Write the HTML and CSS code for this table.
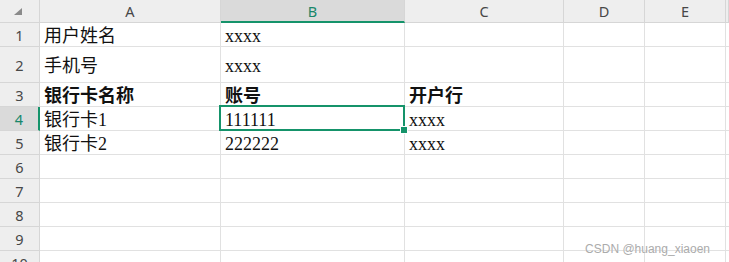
FILE: index.html
```html
<!DOCTYPE html>
<html lang="zh-CN">
<head>
<meta charset="utf-8">
<title>Sheet</title>
<link rel="stylesheet" href="styles.css">
</head>
<body>
<div class="sheet">
  <div class="corner hdr"><svg class="tri" width="8" height="7" viewBox="0 0 8 7"><polygon points="8,0 8,7 0,7" fill="#8a8a8a"/></svg></div>
  <div class="hdr col">A</div>
  <div class="hdr col sel-col">B</div>
  <div class="hdr col">C</div>
  <div class="hdr col">D</div>
  <div class="hdr col">E</div>
  <div class="hdr col"></div>

  <div class="hdr row">1</div>
  <div class="cell">用户姓名</div>
  <div class="cell">xxxx</div>
  <div class="cell"></div><div class="cell"></div><div class="cell"></div><div class="cell"></div>

  <div class="hdr row">2</div>
  <div class="cell">手机号</div>
  <div class="cell">xxxx</div>
  <div class="cell"></div><div class="cell"></div><div class="cell"></div><div class="cell"></div>

  <div class="hdr row">3</div>
  <div class="cell bold">银行卡名称</div>
  <div class="cell bold">账号</div>
  <div class="cell bold">开户行</div>
  <div class="cell"></div><div class="cell"></div><div class="cell"></div>

  <div class="hdr row sel-row">4</div>
  <div class="cell">银行卡1</div>
  <div class="cell active">111111<span class="handle"></span></div>
  <div class="cell">xxxx</div>
  <div class="cell"></div><div class="cell"></div><div class="cell"></div>

  <div class="hdr row">5</div>
  <div class="cell">银行卡2</div>
  <div class="cell">222222</div>
  <div class="cell">xxxx</div>
  <div class="cell"></div><div class="cell"></div><div class="cell"></div>

  <div class="hdr row">6</div>
  <div class="cell"></div><div class="cell"></div><div class="cell"></div><div class="cell"></div><div class="cell"></div><div class="cell"></div>
  <div class="hdr row">7</div>
  <div class="cell"></div><div class="cell"></div><div class="cell"></div><div class="cell"></div><div class="cell"></div><div class="cell"></div>
  <div class="hdr row">8</div>
  <div class="cell"></div><div class="cell"></div><div class="cell"></div><div class="cell"></div><div class="cell"></div><div class="cell"></div>
  <div class="hdr row">9</div>
  <div class="cell"></div><div class="cell"></div><div class="cell"></div><div class="cell"></div><div class="cell"></div><div class="cell"></div>
  <div class="hdr row">10</div>
  <div class="cell"></div><div class="cell"></div><div class="cell"></div><div class="cell"></div><div class="cell"></div><div class="cell"></div>
</div>
<div class="watermark">CSDN @huang_xiaoen</div>
</body>
</html>
```

FILE: styles.css
```css
html, body {
  margin: 0;
  padding: 0;
  background: #ffffff;
  overflow: hidden;
  width: 729px;
  height: 262px;
}

.sheet {
  width: 729px;
  display: grid;
  grid-template-columns: 40px 181px 184px 159px 81px 81px minmax(0, 1fr);
  grid-template-rows: 23px 24px 36px 24px 24px 24px 24px 24px 24px 24px 24px;
}

.sheet > div {
  box-sizing: border-box;
  border-right: 1px solid #e1e1e1;
  border-bottom: 1px solid #e1e1e1;
  min-width: 0;
  overflow: hidden;
}

.hdr {
  background: #eeeeee;
  color: #474747;
  font-family: "Noto Sans", "Liberation Sans", sans-serif;
  font-size: 14.5px;
  display: flex;
  align-items: center;
  justify-content: center;
}

.sheet > .hdr {
  border-right-color: #d6d6d6;
  border-bottom-color: #d6d6d6;
}

.corner {
  justify-content: flex-end;
  align-items: flex-end;
  padding: 0 17px 7px 0;
}

.tri {
  display: block;
}

.sheet > .sel-col {
  background: #dadada;
  color: #18876a;
  border-bottom: 2px solid #15936a;
  padding-top: 1px;
}

.sheet > .sel-row {
  background: #dadada;
  color: #18876a;
  border-right: 2px solid #15936a;
}

.cell {
  font-family: "Liberation Serif", "Noto Sans CJK SC", serif;
  font-size: 18px;
  line-height: 20px;
  color: #111111;
  display: flex;
  align-items: center;
  padding: 3px 4px 0 4px;
  white-space: nowrap;
  position: relative;
}

.sheet > .active {
  overflow: visible;
}

.bold {
  font-weight: bold;
}

.active::before {
  content: "";
  position: absolute;
  left: -2px;
  top: -2px;
  right: -1px;
  bottom: -1px;
  border: 2px solid #15936a;
  pointer-events: none;
}

.handle {
  position: absolute;
  right: -4px;
  bottom: -4px;
  width: 6px;
  height: 6px;
  background: #15936a;
  border: 1px solid #ffffff;
  z-index: 2;
}

.watermark {
  position: absolute;
  right: 19px;
  bottom: 6px;
  font-family: "Liberation Sans", sans-serif;
  font-size: 12px;
  color: #ababab;
  text-shadow: 0 0 1px #ffffff;
}
```
